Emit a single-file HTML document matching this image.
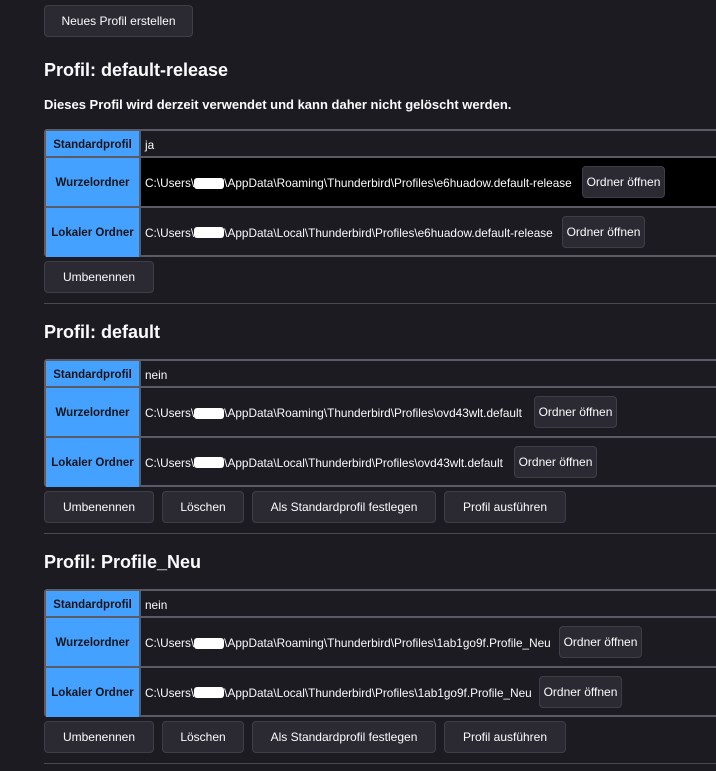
<!DOCTYPE html>
<html><head><meta charset="utf-8"><style>
body{margin:0;width:716px;height:771px;background:#1c1b22;overflow:hidden;position:relative;font-family:"Liberation Sans",sans-serif;color:#fbfbfe}
.a{position:absolute}
.btn{position:absolute;height:32px;background:#2b2a33;border:1px solid #3f3e47;border-radius:4px;color:#fbfbfe;font-size:12px;display:flex;align-items:center;justify-content:center;box-sizing:border-box;white-space:nowrap}
h2{position:absolute;margin:0;font-size:18px;font-weight:bold;left:44px;color:#fbfbfe}
.hr{position:absolute;left:44px;right:0;height:1px;background:#4a4950}
.tbl{position:absolute;left:44px;right:-4px;border:2px solid #5b5b66;border-radius:3px;box-sizing:border-box}
.row{position:absolute;left:0;right:0;border-top:2px solid #5b5b66;box-sizing:border-box}
.row:first-child{border-top:none}
.lab{position:absolute;left:0;top:0;bottom:0;width:93px;background:#45a1ff;color:#15141a;font-weight:bold;font-size:11.5px;display:flex;align-items:center;justify-content:center;border-right:2px solid #5b5b66}
.val{position:absolute;left:99px;top:0;bottom:0;display:flex;align-items:center;font-size:11.8px;white-space:nowrap}
.bl{display:inline-block;width:30px;height:11px;background:#fff;border-radius:3px;vertical-align:middle}
</style></head><body>
<div class="btn" style="left:44px;top:5px;width:149px">Neues Profil erstellen</div>

<h2 style="top:60px">Profil: default-release</h2>
<div class="a" style="left:44px;top:97px;font-size:13px;font-weight:bold">Dieses Profil wird derzeit verwendet und kann daher nicht gelöscht werden.</div>
<div class="tbl" style="top:129px;height:128px">
 <div class="row" style="top:0;height:27px"><div class="lab">Standardprofil</div><div class="val">ja</div></div>
 <div class="row" style="top:25px;height:52px;background:#000"><div class="lab">Wurzelordner</div><div class="val">C:\Users\<span class="bl"></span>\AppData\Roaming\Thunderbird\Profiles\e6huadow.default-release</div></div>
 <div class="row" style="top:75px;height:51px"><div class="lab">Lokaler Ordner</div><div class="val">C:\Users\<span class="bl"></span>\AppData\Local\Thunderbird\Profiles\e6huadow.default-release</div></div>
</div>
<div class="btn" style="left:582px;top:166px;width:83px">Ordner öffnen</div>
<div class="btn" style="left:562px;top:216px;width:83px">Ordner öffnen</div>
<div class="btn" style="left:44px;top:261px;width:110px">Umbenennen</div>
<div class="hr" style="top:303px"></div>

<h2 style="top:322px">Profil: default</h2>
<div class="tbl" style="top:359px;height:128px">
 <div class="row" style="top:0;height:27px"><div class="lab">Standardprofil</div><div class="val">nein</div></div>
 <div class="row" style="top:25px;height:52px"><div class="lab">Wurzelordner</div><div class="val">C:\Users\<span class="bl"></span>\AppData\Roaming\Thunderbird\Profiles\ovd43wlt.default</div></div>
 <div class="row" style="top:75px;height:51px"><div class="lab">Lokaler Ordner</div><div class="val">C:\Users\<span class="bl"></span>\AppData\Local\Thunderbird\Profiles\ovd43wlt.default</div></div>
</div>
<div class="btn" style="left:534px;top:396px;width:83px">Ordner öffnen</div>
<div class="btn" style="left:514px;top:446px;width:83px">Ordner öffnen</div>
<div class="btn" style="left:44px;top:491px;width:110px">Umbenennen</div>
<div class="btn" style="left:162px;top:491px;width:82px">Löschen</div>
<div class="btn" style="left:252px;top:491px;width:184px">Als Standardprofil festlegen</div>
<div class="btn" style="left:444px;top:491px;width:122px">Profil ausführen</div>
<div class="hr" style="top:533px"></div>

<h2 style="top:552px">Profil: Profile_Neu</h2>
<div class="tbl" style="top:589px;height:128px">
 <div class="row" style="top:0;height:27px"><div class="lab">Standardprofil</div><div class="val">nein</div></div>
 <div class="row" style="top:25px;height:52px"><div class="lab">Wurzelordner</div><div class="val">C:\Users\<span class="bl"></span>\AppData\Roaming\Thunderbird\Profiles\1ab1go9f.Profile_Neu</div></div>
 <div class="row" style="top:75px;height:51px"><div class="lab">Lokaler Ordner</div><div class="val">C:\Users\<span class="bl"></span>\AppData\Local\Thunderbird\Profiles\1ab1go9f.Profile_Neu</div></div>
</div>
<div class="btn" style="left:559px;top:626px;width:83px">Ordner öffnen</div>
<div class="btn" style="left:539px;top:676px;width:83px">Ordner öffnen</div>
<div class="btn" style="left:44px;top:721px;width:110px">Umbenennen</div>
<div class="btn" style="left:162px;top:721px;width:82px">Löschen</div>
<div class="btn" style="left:252px;top:721px;width:184px">Als Standardprofil festlegen</div>
<div class="btn" style="left:444px;top:721px;width:122px">Profil ausführen</div>
<div class="hr" style="top:763px"></div>
</body></html>
